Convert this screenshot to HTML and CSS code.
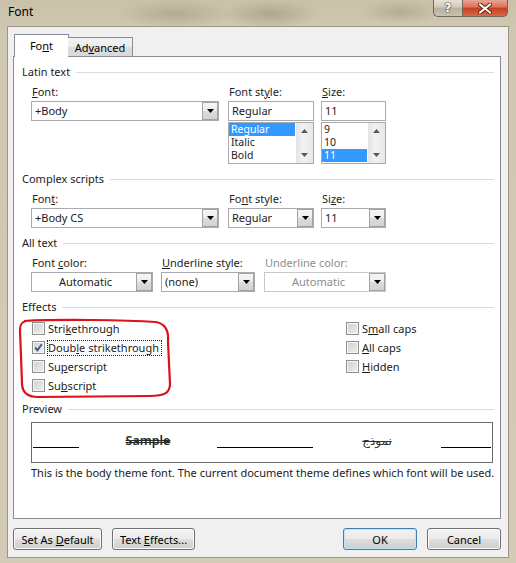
FILE: index.html
```html
<!DOCTYPE html>
<html>
<head>
<meta charset="utf-8">
<title>Font</title>
<link rel="stylesheet" href="styles.css">
</head>
<body>
<div class="window">
  <div class="titlebar">
    <span class="title">Font</span>
    <div class="caption">
      <div class="cap-btn help">?</div>
      <div class="cap-btn close">
        <svg width="14" height="11" viewBox="0 0 14 11"><path d="M2 1.5 L12 9.5 M12 1.5 L2 9.5" stroke="#5a2015" stroke-width="4" stroke-linecap="round"/><path d="M2 1.5 L12 9.5 M12 1.5 L2 9.5" stroke="#ffffff" stroke-width="2.2" stroke-linecap="round"/></svg>
      </div>
    </div>
  </div>

  <div class="client">
    <div class="tabs">
      <div class="tab tab-font active"><span>Fo<u>n</u>t</span></div>
      <div class="tab tab-adv"><span>Ad<u>v</u>anced</span></div>
    </div>

    <div class="panel">
      <div class="group-head"><span>Latin text</span><i class="rule"></i></div>
      <div class="fields">
        <div class="col c1">
          <div class="lbl"><u>F</u>ont:</div>
          <div class="combo"><span class="ctext">+Body</span><span class="dd"><svg width="7" height="4" viewBox="0 0 7 4"><path d="M0 0H7L3.5 4Z" fill="#000"/></svg></span></div>
        </div>
        <div class="col c2">
          <div class="lbl">Font st<u>y</u>le:</div>
          <div class="edit">Regular</div>
          <div class="list">
            <div class="items">
              <div class="item sel">Regular</div>
              <div class="item">Italic</div>
              <div class="item">Bold</div>
            </div>
            <div class="sb">
              <svg width="7" height="4" viewBox="0 0 7 4"><path d="M0 4H7L3.5 0Z" fill="#5a5a5a"/></svg>
              <svg width="7" height="4" viewBox="0 0 7 4"><path d="M0 0H7L3.5 4Z" fill="#5a5a5a"/></svg>
            </div>
          </div>
        </div>
        <div class="col c3">
          <div class="lbl"><u>S</u>ize:</div>
          <div class="edit">11</div>
          <div class="list">
            <div class="items">
              <div class="item">9</div>
              <div class="item">10</div>
              <div class="item sel">11</div>
            </div>
            <div class="sb">
              <svg width="7" height="4" viewBox="0 0 7 4"><path d="M0 4H7L3.5 0Z" fill="#5a5a5a"/></svg>
              <svg width="7" height="4" viewBox="0 0 7 4"><path d="M0 0H7L3.5 4Z" fill="#5a5a5a"/></svg>
            </div>
          </div>
        </div>
      </div>

      <div class="group-head sp"><span>Complex scripts</span><i class="rule"></i></div>
      <div class="fields">
        <div class="col c1">
          <div class="lbl">Fon<u>t</u>:</div>
          <div class="combo"><span class="ctext">+Body CS</span><span class="dd"><svg width="7" height="4" viewBox="0 0 7 4"><path d="M0 0H7L3.5 4Z" fill="#000"/></svg></span></div>
        </div>
        <div class="col c2">
          <div class="lbl">Fo<u>n</u>t style:</div>
          <div class="combo"><span class="ctext">Regular</span><span class="dd"><svg width="7" height="4" viewBox="0 0 7 4"><path d="M0 0H7L3.5 4Z" fill="#000"/></svg></span></div>
        </div>
        <div class="col c3">
          <div class="lbl">Si<u>z</u>e:</div>
          <div class="combo"><span class="ctext">11</span><span class="dd"><svg width="7" height="4" viewBox="0 0 7 4"><path d="M0 0H7L3.5 4Z" fill="#000"/></svg></span></div>
        </div>
      </div>

      <div class="group-head sp"><span>All text</span><i class="rule"></i></div>
      <div class="fields">
        <div class="col d1">
          <div class="lbl">Font <u>c</u>olor:</div>
          <div class="combo"><span class="ctext center">Automatic</span><span class="dd"><svg width="7" height="4" viewBox="0 0 7 4"><path d="M0 0H7L3.5 4Z" fill="#000"/></svg></span></div>
        </div>
        <div class="col d2">
          <div class="lbl"><u>U</u>nderline style:</div>
          <div class="combo"><span class="ctext">(none)</span><span class="dd"><svg width="7" height="4" viewBox="0 0 7 4"><path d="M0 0H7L3.5 4Z" fill="#000"/></svg></span></div>
        </div>
        <div class="col d3">
          <div class="lbl disabled">Underline color:</div>
          <div class="combo dis"><span class="ctext center">Automatic</span><span class="dd"><svg width="7" height="4" viewBox="0 0 7 4"><path d="M0 0H7L3.5 4Z" fill="#000"/></svg></span></div>
        </div>
      </div>

      <div class="group-head sp"><span>Effects</span><i class="rule"></i></div>
      <div class="effects">
        <div class="eff-col eff-left">
          <div class="chk-row"><span class="box"></span><span class="ctl">Stri<u>k</u>ethrough</span></div>
          <div class="chk-row"><span class="box checked"><svg width="11" height="11" viewBox="0 0 11 11"><path d="M2.2 5.6 L4.4 8.3 L8.8 2.2" fill="none" stroke="#3d4f8a" stroke-width="1.8"/></svg></span><span class="ctl focus">Doub<u>l</u>e strikethrough</span></div>
          <div class="chk-row"><span class="box"></span><span class="ctl">Su<u>p</u>erscript</span></div>
          <div class="chk-row"><span class="box"></span><span class="ctl">Su<u>b</u>script</span></div>
        </div>
        <div class="eff-col eff-right">
          <div class="chk-row"><span class="box"></span><span class="ctl">S<u>m</u>all caps</span></div>
          <div class="chk-row"><span class="box"></span><span class="ctl"><u>A</u>ll caps</span></div>
          <div class="chk-row"><span class="box"></span><span class="ctl"><u>H</u>idden</span></div>
        </div>
      </div>

      <div class="group-head prev-head"><span>Preview</span><i class="rule"></i></div>
      <div class="preview">
        <div class="pcell"></div>
        <div class="pcell"><i class="seg"></i></div>
        <div class="pcell ptext"><span class="sample">Sample</span></div>
        <div class="pcell"><i class="seg"></i></div>
        <div class="pcell ptext"><span class="arabic" lang="ar" dir="rtl">نموذج</span></div>
        <div class="pcell"><i class="seg"></i></div>
      </div>
      <div class="desc">This is the body theme font. The current document theme defines which font will be used.</div>
    </div>

    <div class="buttons">
      <div class="btn b-default"><span>Set As <u>D</u>efault</span></div>
      <div class="btn b-effects"><span>Text <u>E</u>ffects...</span></div>
      <div class="btn b-ok"><span>OK</span></div>
      <div class="btn b-cancel"><span>Cancel</span></div>
    </div>
  </div>

  <svg class="annot" width="516" height="563" viewBox="0 0 516 563">
    <path d="M24 321 C 60 319, 125 320, 156 322 C 166 324, 169 331, 168 342 L 170 384 C 170 393, 164 396, 150 396 L 38 397 C 27 397, 22 392, 22 383 L 20 330 C 20 325, 21 322, 26 321" fill="none" stroke="#dc1119" stroke-width="2.2"/>
  </svg>
</div>
</body>
</html>
```

FILE: styles.css
```css
* { box-sizing: border-box; }

body {
  margin: 0;
  font-family: "Noto Sans", "Open Sans", sans-serif;
  font-size: 11px;
  color: #1b1b1b;
}

u { text-decoration: underline; text-underline-offset: 1px; }

.window {
  position: relative;
  width: 516px;
  height: 563px;
  display: flex;
  flex-direction: column;
  overflow: hidden;
  background:
    radial-gradient(ellipse 60px 14px at 175px 14px, rgba(150,140,115,0.45), rgba(150,140,115,0)),
    radial-gradient(ellipse 50px 14px at 270px 14px, rgba(140,130,105,0.45), rgba(140,130,105,0)),
    radial-gradient(ellipse 40px 12px at 400px 12px, rgba(140,130,105,0.35), rgba(140,130,105,0)),
    linear-gradient(180deg, #c9c0a8 0px, #cfc7b1 26px, #d3cbb6 100%);
}

.titlebar {
  height: 26px;
  display: flex;
  align-items: flex-start;
}

.title {
  margin: 5px 0 0 8px;
  font-size: 12px;
  line-height: 14px;
  color: #000;
}

.caption {
  margin-left: auto;
  margin-right: 8px;
  display: flex;
}

.cap-btn {
  height: 17px;
  display: flex;
  align-items: center;
  justify-content: center;
  border: 1px solid #6e6757;
  border-top: none;
}

.help {
  width: 29px;
  border-radius: 0 0 0 5px;
  border-right: none;
  background: linear-gradient(180deg, #e6e2d9 0%, #d0cabb 45%, #b9b09d 50%, #c9c2b1 100%);
  color: #fff;
  font-family: "DejaVu Sans", sans-serif;
  font-weight: bold;
  font-size: 12px;
  text-shadow: 0 0 1px #444, 0 0 1px #444, 0 0 2px #555;
}

.close {
  width: 46px;
  border-radius: 0 0 5px 0;
  background: linear-gradient(180deg, #e9a592 0%, #d9705a 45%, #c4401f 50%, #d56a47 100%);
}

.client {
  flex: 1;
  margin: 0 7px 5px 7px;
  background: #f0f0f0;
  border: 1px solid #9d9583;
  padding: 7px 7px 0 5px;
  display: flex;
  flex-direction: column;
}

.tabs {
  display: flex;
  align-items: flex-start;
  height: 23px;
  margin-bottom: -1px;
  padding-left: 1px;
  position: relative;
  z-index: 1;
}

.tab {
  border: 1px solid #898c95;
  border-bottom: none;
  text-align: center;
  color: #000;
}

.tab-font {
  width: 55px;
  height: 23px;
  line-height: 22px;
  background: #fff;
}

.tab-adv {
  width: 65px;
  height: 19px;
  margin-top: 3px;
  margin-left: -1px;
  line-height: 19px;
  background: linear-gradient(180deg, #f3f3f3 0%, #ebebeb 50%, #dddddd 51%, #d9d9d9 100%);
  border-left: none;
}

.panel {
  height: 463px;
  border: 1px solid #898c95;
  background: #fff;
  padding: 8px 6px 0 8px;
}

.group-head {
  display: flex;
  align-items: center;
  height: 14px;
  line-height: 14px;
  color: #222;
}

.group-head.sp { margin-top: 8px; }
.group-head.prev-head { margin-top: 7px; }

.rule {
  flex: 1;
  height: 1px;
  margin-left: 6px;
  background: #dcdcdc;
}

.fields {
  display: flex;
  margin: 6px 0 0 9px;
}

.c1 { width: 188px; }
.c2 { width: 86px; margin-left: 9px; }
.c3 { width: 65px; margin-left: 7px; }
.d1 { width: 122px; }
.d2 { width: 94px; margin-left: 8px; }
.d3 { width: 122px; margin-left: 9px; }

.lbl {
  height: 14px;
  line-height: 14px;
  padding-left: 1px;
  margin-bottom: 2px;
  color: #1e1e1e;
  white-space: nowrap;
}

.lbl.disabled { color: #8d8d8d; }

.combo {
  height: 20px;
  border: 1px solid #a9abb0;
  display: flex;
  align-items: stretch;
  background: #fff;
}

.combo.dis { border-color: #c8c8c8; color: #8d8d8d; }

.ctext {
  flex: 1;
  padding-left: 3px;
  line-height: 18px;
  white-space: nowrap;
  overflow: hidden;
}

.ctext.center { text-align: center; }

.dd {
  width: 16px;
  border: 1px solid #a3a3a3;
  background: linear-gradient(180deg, #f6f6f6 0%, #ececec 50%, #dcdcdc 51%, #d3d3d3 100%);
  display: flex;
  align-items: center;
  justify-content: center;
}

.edit {
  height: 20px;
  border: 1px solid #a9abb0;
  padding-left: 3px;
  line-height: 18px;
}

.list {
  height: 42px;
  margin-top: 1px;
  border: 1px solid #a9abb0;
  display: flex;
  overflow: hidden;
}

.items {
  flex: 1;
}

.item {
  height: 13px;
  line-height: 13px;
  padding-left: 2px;
  font-size: 10.5px;
}

.item.sel {
  background: #3399ff;
  color: #fff;
}

.sb {
  width: 17px;
  margin-left: 1px;
  background: linear-gradient(90deg, #e3e3e3, #f2f2f2 40%, #e6e6e6);
  display: flex;
  flex-direction: column;
  align-items: center;
  justify-content: space-between;
  padding: 6px 0 6px;
}

.effects {
  display: flex;
  margin: 5px 0 0 10px;
}

.eff-left { width: 314px; }

.chk-row {
  height: 19px;
  display: flex;
  align-items: center;
}

.box {
  width: 13px;
  height: 13px;
  border: 1px solid #8f8f8f;
  background: linear-gradient(135deg, #cfcfcf 0%, #f0f0f0 100%);
  box-shadow: inset 0 0 0 1px #f6f6f6;
  display: flex;
  align-items: center;
  justify-content: center;
}

.ctl {
  margin-left: 2px;
  border: 1px dotted transparent;
  padding: 0 2px 0 0;
  line-height: 14px;
  color: #1b1b1b;
  white-space: nowrap;
}

.ctl.focus { border-color: #222; }

.preview {
  display: grid;
  grid-template-columns: 1px 46px 138px 96px 128px 50px;
  width: 462px;
  height: 41px;
  margin: 6px 0 0 9px;
  border: 1px solid #6b6b6b;
}

.seg {
  display: block;
  height: 1px;
  margin-top: 24px;
  background: #000;
}

.ptext {
  display: flex;
  justify-content: center;
  padding-top: 10px;
}

.sample {
  font-size: 12.5px;
  font-weight: 600;
  line-height: 16px;
  color: #2a2a2a;
  text-decoration: line-through double;
  text-decoration-thickness: 1px;
}

.arabic {
  font-family: "DejaVu Sans", sans-serif;
  font-size: 12px;
  line-height: 16px;
  color: #333;
  text-decoration: line-through;
  text-decoration-thickness: 1px;
}

.desc {
  margin: 3px 0 0 9px;
  line-height: 14px;
  color: #1b1b1b;
  white-space: nowrap;
}

.buttons {
  display: flex;
  height: 22px;
  margin-top: 9px;
}

.btn {
  height: 22px;
  border: 1px solid #707070;
  border-radius: 3px;
  background: linear-gradient(180deg, #f2f2f2 0%, #ebebeb 48%, #dddddd 52%, #cfcfcf 100%);
  box-shadow: inset 0 0 0 1px #fbfbfb;
  display: flex;
  align-items: center;
  justify-content: center;
  color: #000;
  white-space: nowrap;
}

.b-default { width: 89px; }
.b-effects { width: 83px; margin-left: 10px; }
.b-ok {
  width: 74px;
  margin-left: auto;
  border-color: #3c7fb1;
  box-shadow: inset 0 0 0 1px #bde6f8;
}
.b-cancel { width: 74px; margin-left: 10px; }

.annot {
  position: absolute;
  left: 0;
  top: 0;
  pointer-events: none;
}
```
